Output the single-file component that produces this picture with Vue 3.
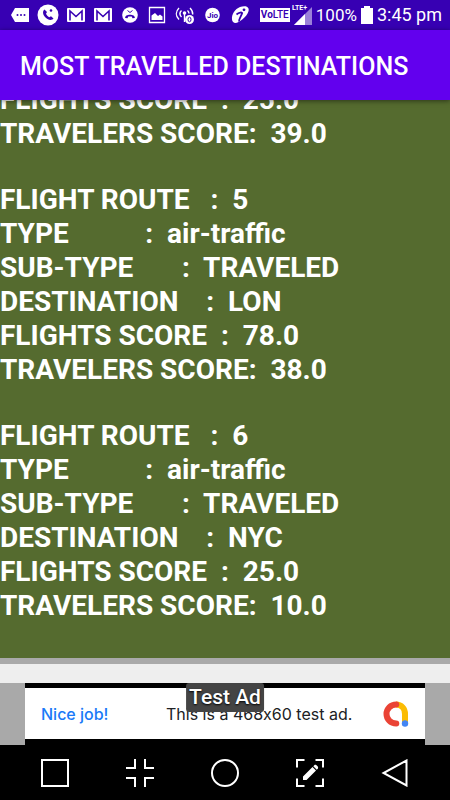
<script setup>
const routes = [
  {
    id: 4,
    rows: [
      ['FLIGHTS SCORE  :', '25.0'],
      ['TRAVELERS SCORE:', '39.0'],
    ],
  },
  {
    id: 5,
    rows: [
      ['FLIGHT ROUTE   :', '5'],
      ['TYPE           :', 'air-traffic'],
      ['SUB-TYPE       :', 'TRAVELED'],
      ['DESTINATION    :', 'LON'],
      ['FLIGHTS SCORE  :', '78.0'],
      ['TRAVELERS SCORE:', '38.0'],
    ],
  },
  {
    id: 6,
    rows: [
      ['FLIGHT ROUTE   :', '6'],
      ['TYPE           :', 'air-traffic'],
      ['SUB-TYPE       :', 'TRAVELED'],
      ['DESTINATION    :', 'NYC'],
      ['FLIGHTS SCORE  :', '25.0'],
      ['TRAVELERS SCORE:', '10.0'],
    ],
  },
]
</script>

<template>
  <div class="screen">
    <div class="status-bar">
      <div class="notifications">
        <svg width="18" height="20" viewBox="0 0 18 20">
          <path d="M4 3h14v14H4l-4-7z" fill="#fff" />
          <g fill="#3700b3"><circle cx="6.5" cy="10" r="1" /><circle cx="10" cy="10" r="1" /><circle cx="13.5" cy="10" r="1" /></g>
        </svg>
        <svg width="20" height="22" viewBox="0 0 20 22">
          <circle cx="10" cy="11" r="10.5" fill="#fff" />
          <path d="M6.500 5.500c-2.500 2-1.500 5.500 1 8s6 3.500 8 1l-2.500-2.200-1.800 1c-1.500-.8-2.500-2-3.200-3.500l1-1.800z" fill="#3700b3" />
          <circle cx="13" cy="6.500" r="1.300" fill="#3700b3" />
        </svg>
        <svg v-for="n in 2" :key="n" width="18" height="14" viewBox="0 0 18 14">
          <rect width="18" height="14" rx="1" fill="#fff" />
          <path d="M3 12.500V3l6 5.500L15 3v9.500" fill="none" stroke="#3700b3" stroke-width="1.600" />
        </svg>
        <svg width="18" height="16" viewBox="0 0 18 16">
          <circle cx="9" cy="8" r="7.800" fill="#fff" />
          <path d="M4.200 11c-.8-4.500 10.400-4.500 9.600 0l-2.300.3-.8-1.800H7.300l-.8 1.800z" fill="#3700b3" />
          <path d="m6.500 3.500 2.500 2 2.500-2" fill="none" stroke="#3700b3" />
        </svg>
        <svg width="18" height="18" viewBox="0 0 18 18">
          <path d="M1.500 1.500h15v15h-15z" fill="none" stroke="#fff" stroke-width="1.300" />
          <path d="M3.500 14V9.500L7 7l3 3 2-1.500 2.500 2V14z" fill="#fff" />
        </svg>
        <svg width="20" height="20" viewBox="0 0 20 20">
          <g fill="none" stroke="#fff" stroke-width="1.400">
            <path d="M4 3c-3.500 3.500-3.500 8 0 11.500M15 3c2 2 3 4 2.700 6.500M6.500 5.500c-2 2-2 4.500 0 6.500M12.500 5.500c1 1 1.500 2 1.500 3M9.500 9v8" />
          </g>
          <circle cx="9.500" cy="8" r="1.800" fill="#fff" />
          <circle cx="14.500" cy="14.500" r="4.500" fill="#fff" />
          <ellipse cx="14.500" cy="14.500" rx="1.500" ry="2.300" fill="none" stroke="#3700b3" />
        </svg>
        <svg width="17" height="16" viewBox="0 0 17 16">
          <circle cx="8.500" cy="8" r="7.300" fill="#fff" />
          <text x="8.500" y="11" class="jio">Jio</text>
        </svg>
        <svg width="20" height="20" viewBox="0 0 20 20">
          <path d="M10 2C5 4 1.500 9 2 14.500c.3 3.500 3.500 4.500 6.500 2.500C14 14.500 20 7 18.500 3.500c-1.200-3-5.500-2.500-8.500-1.500z" fill="#fff" />
          <path d="M6.500 9.500C9 7.500 12 7 12.200 8c-1 3-3.700 6.500-3 8.500" fill="none" stroke="#3700b3" stroke-width="1.800" />
          <circle cx="14" cy="4.800" r="1.400" fill="#3700b3" />
        </svg>
      </div>
      <div class="system">
        <span class="volte"><b>Vo</b>LTE</span>
        <svg width="18" height="24" viewBox="0 0 18 24">
          <path d="M18 4v18H0z" fill="#9b80d9" />
          <path d="M11 11v11H0z" fill="#fff" />
          <text x="-2" y="7" class="lte">LTE+</text>
        </svg>
        <span class="percent">100%</span>
        <svg width="12" height="18" viewBox="0 0 12 18">
          <path d="M3 0h6v2h3v16H0V2h3z" fill="#fff" />
        </svg>
        <span class="clock">3:45 pm</span>
      </div>
    </div>

    <header class="app-bar">
      <h1>MOST TRAVELLED DESTINATIONS</h1>
    </header>

    <main class="list">
      <section v-for="route in routes" :key="route.id" class="route">
        <p v-for="[label, value] in route.rows" :key="label">{{ label + '  ' + value }}</p>
      </section>
    </main>

    <div class="divider"></div>

    <div class="ad-strip">
      <div class="ad">
        <div class="ad-body">
          <a href="#" class="ad-link">Nice job!</a>
          <span class="ad-text">This is a 468x60 test ad.</span>
          <svg width="28" height="28" viewBox="0 0 28 28">
            <path d="M14 4.500c5.500 0 9 4 9 9.500v9" fill="none" stroke="#fbbc04" stroke-width="6" />
            <path d="M14.300 4.500C8.500 4.500 4.500 9 4.500 14s4 9.500 9.800 9.500" fill="none" stroke="#ea4335" stroke-width="6" stroke-linecap="round" />
            <circle cx="23" cy="23.500" r="3.200" fill="#4285f4" />
          </svg>
        </div>
        <span class="ad-badge">Test Ad</span>
      </div>
    </div>

    <nav class="nav-bar">
      <button type="button" aria-label="Recent apps">
        <svg viewBox="0 0 28 28"><path d="M1 1h26v26H1z" /></svg>
      </button>
      <button type="button" aria-label="Shrink screen">
        <svg viewBox="0 0 28 28"><path d="M9 0v9H0M19 0v9h9M9 28v-9H0M19 28v-9h9" /></svg>
      </button>
      <button type="button" aria-label="Home">
        <svg viewBox="0 0 28 28"><circle cx="14" cy="14" r="13" /></svg>
      </button>
      <button type="button" aria-label="Capture and edit">
        <svg viewBox="0 0 28 28">
          <path d="M8.500 1H1v7.500M19.500 1H27v7.500M8.500 27H1v-7.500M19.500 27H27v-7.500" />
          <path class="solid" d="m7 17.500 9.500-9.500 3.500 3.500-9.500 9.500H7zM17.300 7.200l1-1c1.500-1.500 5 2 3.500 3.500l-1 1z" />
        </svg>
      </button>
      <button type="button" aria-label="Back">
        <svg viewBox="0 0 28 28"><path d="M25.500 1.500v25L2.500 14z" /></svg>
      </button>
    </nav>
  </div>
</template>

<style>
body { margin: 0; }
</style>

<style scoped>
.screen {
  height: 100vh; display: flex; flex-direction: column;
  background: #000; color: #fff;
  font-family: Roboto, "Liberation Sans", sans-serif;
}

.status-bar {
  flex: none; height: 30px; padding: 0 8px 0 11px;
  display: flex; align-items: center; justify-content: space-between;
  background: #3700b3;
}
.status-bar svg { flex: none; overflow: visible; }
.notifications { display: flex; align-items: center; gap: 9px; }
.system { display: flex; align-items: center; gap: 4px; font-size: 18px; line-height: 30px; }
.percent { font-size: 17px; }
.jio { font: bold 8px Roboto, sans-serif; fill: #3700b3; text-anchor: middle; }
.lte { font: bold 7px Roboto, sans-serif; fill: #fff; }
.volte {
  width: 30px; height: 14px; line-height: 14px; text-align: center;
  background: #fff; color: #3700b3; font-size: 10px; font-weight: 500;
}

.app-bar {
  flex: none; height: 70px; padding: 0 20px; display: flex; align-items: center;
  background: #6200ee; box-shadow: 0 1px 5px rgba(0, 0, 0, 0.5);
  position: relative; z-index: 1;
}
h1 { margin: 4px 0 0; font-size: 25px; line-height: 32px; font-weight: 500; white-space: nowrap; }

.list {
  flex: 1; min-height: 0; overflow: hidden; padding-bottom: 35px;
  display: flex; flex-direction: column; justify-content: flex-end; gap: 32px;
  background: #556b2f;
}
.route { flex: none; }
.route p { margin: 0; font-size: 28px; line-height: 34px; font-weight: 700; white-space: pre; }

.divider { flex: none; height: 19px; border-top: 6px solid #a9a9a9; background: #eee; }

.ad-strip { flex: none; padding: 0 25px; background: #a9a9a9; }
.ad { position: relative; padding: 5px 0 6px; background: #000; }
.ad-body {
  height: 51px; padding: 0 15px 0 16px; display: flex; align-items: center;
  background: #fff; font-family: Inter, Roboto, sans-serif; font-size: 16px; line-height: 20px;
  /* keeps Inter from turning the x in 468x60 into a multiplication sign */
  font-feature-settings: "calt" 0;
}
.ad-link { flex: 0 0 125px; color: #1a7af8; font-weight: 500; text-decoration: none; }
.ad-text { flex: 1; color: #202124; white-space: nowrap; }
.ad-badge {
  position: absolute; top: 0; left: 50%; transform: translateX(-50%);
  padding: 0 3px; border-radius: 3px; background: #444;
  font-size: 21px; line-height: 29px; font-weight: 500; white-space: nowrap;
  text-shadow: 0 1px 2px #000;
}

.nav-bar { flex: none; height: 55px; padding: 0 12px; display: flex; background: #000; }
.nav-bar button {
  flex: 1; padding: 0; border: 0; background: none;
  display: flex; align-items: center; justify-content: center;
}
.nav-bar svg { width: 28px; height: 28px; fill: none; stroke: #fff; stroke-width: 2; }
.nav-bar .solid { fill: #fff; stroke: none; }
</style>
